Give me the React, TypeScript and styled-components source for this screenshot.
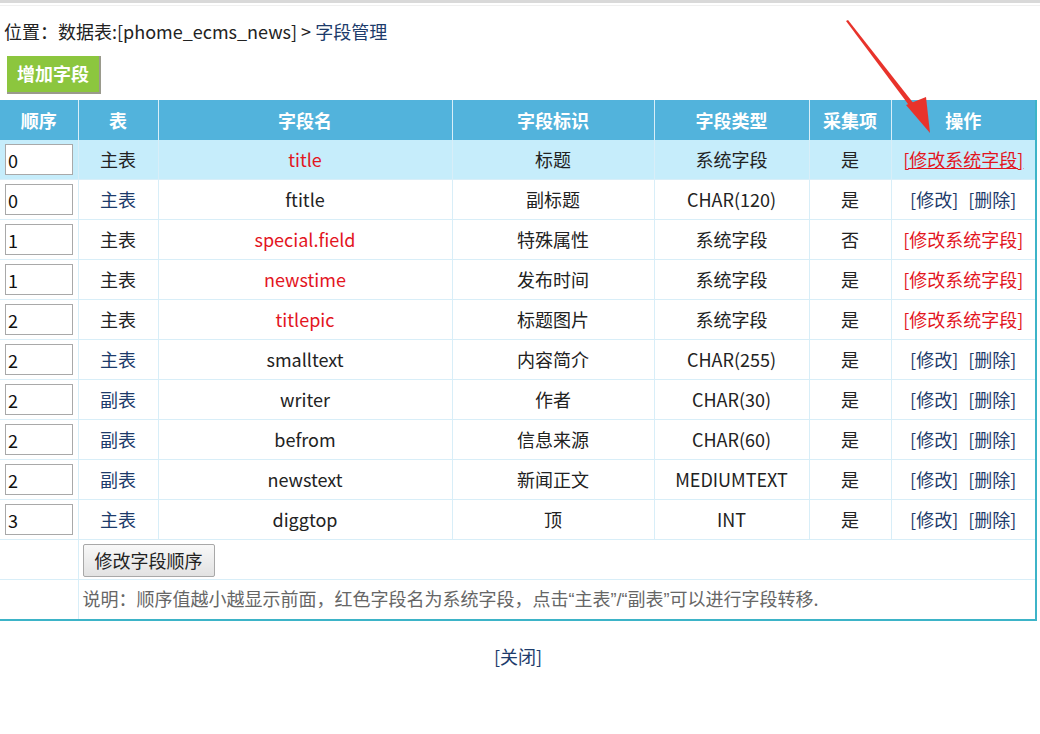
import React from 'react';
import styled, { createGlobalStyle } from 'styled-components';

const GlobalStyle = createGlobalStyle`
	html, body {
		margin: 0;
		padding: 0;
		background: #fff;
	}
	body {
		font-family: "Microsoft YaHei", "Noto Sans CJK SC", "Noto Sans", sans-serif;
		font-size: 18px;
		color: #222;
	}
`;

const Page = styled.div`
	position: relative;
	width: 1040px;
	min-height: 734px;
	border-top: 3px solid #d9d9d9;
	box-sizing: border-box;
`;

const TopLine = styled.div`
	height: 1px;
	margin-top: 2px;
	background: #f0f0f0;
`;

const Crumb = styled.div`
	padding: 13px 0 0 4px;
	height: 24px;
	line-height: 24px;
	color: #222;
`;

const NavLink = styled.a`
	color: #1d3b6b;
	text-decoration: none;
`;

const AddButton = styled.button`
	display: block;
	margin: 13px 0 6px 7px;
	width: 94px;
	height: 38px;
	padding: 0 0 2px;
	background: #8cc63e;
	border: none;
	border-right: 2px solid #9a9a8c;
	border-bottom: 2px solid #9a9a8c;
	color: #fff;
	font-family: inherit;
	font-size: 18px;
	font-weight: bold;
`;

const Table = styled.table`
	width: 1036px;
	border-collapse: collapse;
	table-layout: fixed;
	border-right: 2px solid #3db4c8;
	border-bottom: 2px solid #3db4c8;
`;

const HeadCell = styled.th`
	height: 40px;
	padding: 0;
	background: #52b3dc;
	color: #fff;
	font-size: 18px;
	font-weight: bold;
	text-align: center;
	border-left: 1px solid #d8eef8;
	&:first-child {
		border-left: none;
	}
`;

const Row = styled.tr<{ $active?: boolean }>`
	background: ${(p) => (p.$active ? '#c6edfb' : '#fff')};
`;

const Cell = styled.td<{ $tone?: 'red' | 'navy' | 'note' }>`
	height: 37px;
	padding: 0 0 2px;
	text-align: center;
	line-height: 24px;
	border: 1px solid #d8eef8;
	border-top: none;
	color: ${(p) =>
		p.$tone === 'red' ? '#e3151e' : p.$tone === 'navy' ? '#1d3b6b' : p.$tone === 'note' ? '#666' : '#222'};
	&:first-child {
		border-left: none;
	}
`;

const LeftCell = styled(Cell)`
	text-align: left;
	padding-left: 4px;
`;

const OrderInput = styled.input`
	box-sizing: border-box;
	width: 68px;
	height: 31px;
	margin: 2px 0 0 1px;
	padding: 0 2px;
	border: 1px solid #a9a9a9;
	font-family: inherit;
	font-size: 18px;
	color: #111;
	vertical-align: middle;
`;

const ActLink = styled.a<{ $red?: boolean; $under?: boolean }>`
	color: ${(p) => (p.$red ? '#e3151e' : '#1d3b6b')};
	text-decoration: ${(p) => (p.$under ? 'underline' : 'none')};
	& + & {
		margin-left: 10px;
	}
`;

const OrderButton = styled.button`
	height: 33px;
	padding: 0 11px;
	margin-top: 3px;
	border: 1px solid #a8a8a8;
	border-radius: 2px;
	background: linear-gradient(#f8f8f8, #e2e2e2);
	font-family: inherit;
	font-size: 18px;
	color: #222;
	vertical-align: middle;
`;

const Punct = styled.span`
	font-family: "Liberation Sans", Arial, sans-serif;
`;

const Footer = styled.div`
	text-align: center;
	padding: 22px 0 0 0;
	margin-left: -4px;
`;

const Arrow = styled.svg`
	position: absolute;
	left: 840px;
	top: 12px;
	pointer-events: none;
`;

type Field = {
	order: number;
	table: '主表' | '副表';
	name: string;
	label: string;
	type: string;
	collect: string;
	system: boolean;
};

const fields: Field[] = [
	{ order: 0, table: '主表', name: 'title', label: '标题', type: '系统字段', collect: '是', system: true },
	{ order: 0, table: '主表', name: 'ftitle', label: '副标题', type: 'CHAR(120)', collect: '是', system: false },
	{ order: 1, table: '主表', name: 'special.field', label: '特殊属性', type: '系统字段', collect: '否', system: true },
	{ order: 1, table: '主表', name: 'newstime', label: '发布时间', type: '系统字段', collect: '是', system: true },
	{ order: 2, table: '主表', name: 'titlepic', label: '标题图片', type: '系统字段', collect: '是', system: true },
	{ order: 2, table: '主表', name: 'smalltext', label: '内容简介', type: 'CHAR(255)', collect: '是', system: false },
	{ order: 2, table: '副表', name: 'writer', label: '作者', type: 'CHAR(30)', collect: '是', system: false },
	{ order: 2, table: '副表', name: 'befrom', label: '信息来源', type: 'CHAR(60)', collect: '是', system: false },
	{ order: 2, table: '副表', name: 'newstext', label: '新闻正文', type: 'MEDIUMTEXT', collect: '是', system: false },
	{ order: 3, table: '主表', name: 'diggtop', label: '顶', type: 'INT', collect: '是', system: false }
];

const widths = [78, 80, 294, 202, 155, 82, 145];
const heads = ['顺序', '表', '字段名', '字段标识', '字段类型', '采集项', '操作'];

const App: React.FC = () => {
	return (
		<React.Fragment>
			<GlobalStyle />
			<Page>
				<TopLine />
				<Crumb>
					位置：数据表:[phome_ecms_news] &gt; <NavLink href="#">字段管理</NavLink>
				</Crumb>
				<AddButton>增加字段</AddButton>
				<Table>
					<colgroup>
						{widths.map((w, i) => (
							<col key={i} style={{ width: w }} />
						))}
					</colgroup>
					<thead>
						<tr>
							{heads.map((h) => (
								<HeadCell key={h}>{h}</HeadCell>
							))}
						</tr>
					</thead>
					<tbody>
						{fields.map((f, i) => (
							<Row key={f.name} $active={i === 0}>
								<LeftCell>
									<OrderInput defaultValue={String(f.order)} />
								</LeftCell>
								<Cell $tone={f.system ? undefined : 'navy'}>{f.table}</Cell>
								<Cell $tone={f.system ? 'red' : undefined}>{f.name}</Cell>
								<Cell>{f.label}</Cell>
								<Cell>{f.type}</Cell>
								<Cell>{f.collect}</Cell>
								<Cell>
									{f.system ? (
										<ActLink href="#" $red $under={i === 0}>
											[修改系统字段]
										</ActLink>
									) : (
										<>
											<ActLink href="#">[修改]</ActLink>
											<ActLink href="#">[删除]</ActLink>
										</>
									)}
								</Cell>
							</Row>
						))}
						<Row>
							<Cell />
							<LeftCell colSpan={6}>
								<OrderButton>修改字段顺序</OrderButton>
							</LeftCell>
						</Row>
						<Row>
							<Cell />
							<LeftCell colSpan={6} $tone="note">
								说明：顺序值越小越显示前面，红色字段名为系统字段，点击<Punct>“</Punct>主表<Punct>”/“</Punct>副表
								<Punct>”</Punct>可以进行字段转移.
							</LeftCell>
						</Row>
					</tbody>
				</Table>
				<Footer>
					<NavLink href="#">[关闭]</NavLink>
				</Footer>
				<Arrow width="110" height="125" viewBox="0 0 110 125">
					<polygon points="6,6 8,5 78,94 74,97" fill="#e8332b" />
					<polygon points="66,90 86,82 90,118" fill="#e8332b" />
				</Arrow>
			</Page>
		</React.Fragment>
	);
};

export default App;
